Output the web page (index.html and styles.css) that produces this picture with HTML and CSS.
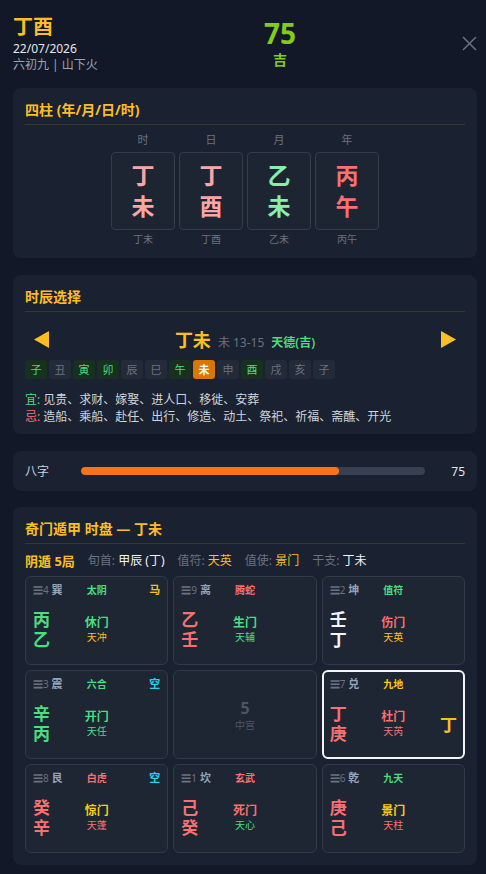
FILE: index.html
```html
<!doctype html>
<html lang="zh">
  <head>
    <meta charset="UTF-8" />
    <meta name="viewport" content="width=device-width, initial-scale=1.0" />
    <title>丁酉 - 22/07/2026</title>
    <link rel="stylesheet" href="styles.css">
  </head>

  <body>
    <div class="page">
      <div class="top">
        <div class="day">
          <div class="day-name">丁酉</div>
          <div class="day-date">22/07/2026</div>
          <div class="day-sub">六初九 | 山下火</div>
        </div>
        <div class="score">
          <div class="score-num">75</div>
          <div class="score-tag">吉</div>
        </div>
        <button class="close" aria-label="关闭">
          <svg width="15" height="15" viewBox="0 0 15 15">
            <path d="M1 1 L14 14 M14 1 L1 14" stroke="#6b7280" stroke-width="1.5" fill="none" />
          </svg>
        </button>
      </div>

      <!-- 四柱 -->
      <div class="card">
        <h2 class="card-title">四柱 (年/月/日/时)</h2>
        <div class="pillars">
          <div class="pillar">
            <div class="pillar-label">时</div>
            <div class="pillar-box pink"><span>丁</span><span>未</span></div>
            <div class="pillar-name">丁未</div>
          </div>
          <div class="pillar">
            <div class="pillar-label">日</div>
            <div class="pillar-box pink"><span>丁</span><span>酉</span></div>
            <div class="pillar-name">丁酉</div>
          </div>
          <div class="pillar">
            <div class="pillar-label">月</div>
            <div class="pillar-box mint"><span>乙</span><span>未</span></div>
            <div class="pillar-name">乙未</div>
          </div>
          <div class="pillar">
            <div class="pillar-label">年</div>
            <div class="pillar-box red"><span>丙</span><span>午</span></div>
            <div class="pillar-name">丙午</div>
          </div>
        </div>
      </div>

      <!-- 时辰选择 -->
      <div class="card card-hours">
        <h2 class="card-title">时辰选择</h2>
        <div class="hour-nav">
          <button class="arrow" aria-label="上一个">
            <svg width="15" height="17" viewBox="0 0 15 17"><polygon points="15,0 15,17 0,8.5" fill="#fbbf24" /></svg>
          </button>
          <div class="hour-current">
            <span class="hour-name">丁未</span>
            <span class="hour-time">未 13-15</span>
            <span class="hour-god">天德(吉)</span>
          </div>
          <button class="arrow" aria-label="下一个">
            <svg width="15" height="17" viewBox="0 0 15 17"><polygon points="0,0 0,17 15,8.5" fill="#fbbf24" /></svg>
          </button>
        </div>
        <div class="chips">
          <span class="chip good">子</span>
          <span class="chip">丑</span>
          <span class="chip good">寅</span>
          <span class="chip good">卯</span>
          <span class="chip">辰</span>
          <span class="chip">巳</span>
          <span class="chip good">午</span>
          <span class="chip active">未</span>
          <span class="chip">申</span>
          <span class="chip good">酉</span>
          <span class="chip">戌</span>
          <span class="chip">亥</span>
          <span class="chip">子</span>
        </div>
        <div class="rules">
          <div><span class="yi">宜:</span> 见贵、求财、嫁娶、进人口、移徙、安葬</div>
          <div><span class="ji">忌:</span> 造船、乘船、赴任、出行、修造、动土、祭祀、祈福、斋醮、开光</div>
        </div>
      </div>

      <!-- 八字分数 -->
      <div class="card card-bar">
        <div class="bar-row">
          <span class="bar-label">八字</span>
          <div class="bar-track"><div class="bar-fill" style="width: 75%"></div></div>
          <span class="bar-value">75</span>
        </div>
      </div>

      <!-- 奇门遁甲 -->
      <div class="card">
        <h2 class="card-title">奇门遁甲 时盘 — 丁未</h2>
        <div class="qm-info">
          <span class="qm-ju">阴遁 5局</span>
          <span><span class="muted">旬首:</span> <span class="white">甲辰 (丁)</span></span>
          <span><span class="muted">值符:</span> <span class="gold">天英</span></span>
          <span><span class="muted">值使:</span> <span class="gold">景门</span></span>
          <span><span class="muted">干支:</span> <span class="white">丁未</span></span>
        </div>

        <div class="qm-grid">
          <div class="cell">
            <div class="cell-top">
              <span class="palace"><span class="gua">☰4</span> 巽</span>
              <span class="deity green">太阴</span>
              <span class="mark gold">马</span>
            </div>
            <div class="cell-body">
              <div class="stems green"><span>丙</span><span>乙</span></div>
              <div class="door"><span class="door-name green">休门</span><span class="star gold">天冲</span></div>
            </div>
          </div>

          <div class="cell">
            <div class="cell-top">
              <span class="palace"><span class="gua">☰9</span> 离</span>
              <span class="deity red">腾蛇</span>
            </div>
            <div class="cell-body">
              <div class="stems red"><span>乙</span><span>壬</span></div>
              <div class="door"><span class="door-name green">生门</span><span class="star green">天辅</span></div>
            </div>
          </div>

          <div class="cell">
            <div class="cell-top">
              <span class="palace"><span class="gua">☰2</span> 坤</span>
              <span class="deity green">值符</span>
            </div>
            <div class="cell-body">
              <div class="stems white"><span>壬</span><span>丁</span></div>
              <div class="door"><span class="door-name red">伤门</span><span class="star gold">天英</span></div>
            </div>
          </div>

          <div class="cell">
            <div class="cell-top">
              <span class="palace"><span class="gua">☰3</span> 震</span>
              <span class="deity green">六合</span>
              <span class="mark cyan">空</span>
            </div>
            <div class="cell-body">
              <div class="stems green"><span>辛</span><span>丙</span></div>
              <div class="door"><span class="door-name green">开门</span><span class="star green">天任</span></div>
            </div>
          </div>

          <div class="cell cell-center">
            <span class="center-num">5</span>
            <span class="center-name">中宫</span>
          </div>

          <div class="cell selected">
            <div class="cell-top">
              <span class="palace"><span class="gua">☰7</span> 兑</span>
              <span class="deity yellow">九地</span>
            </div>
            <div class="cell-body">
              <div class="stems red"><span>丁</span><span>庚</span></div>
              <div class="door"><span class="door-name red">杜门</span><span class="star red">天芮</span></div>
              <div class="extra gold">丁</div>
            </div>
          </div>

          <div class="cell">
            <div class="cell-top">
              <span class="palace"><span class="gua">☰8</span> 艮</span>
              <span class="deity red">白虎</span>
              <span class="mark cyan">空</span>
            </div>
            <div class="cell-body">
              <div class="stems red"><span>癸</span><span>辛</span></div>
              <div class="door"><span class="door-name yellow">惊门</span><span class="star red">天蓬</span></div>
            </div>
          </div>

          <div class="cell">
            <div class="cell-top">
              <span class="palace"><span class="gua">☰1</span> 坎</span>
              <span class="deity red">玄武</span>
            </div>
            <div class="cell-body">
              <div class="stems red"><span>己</span><span>癸</span></div>
              <div class="door"><span class="door-name red">死门</span><span class="star green">天心</span></div>
            </div>
          </div>

          <div class="cell">
            <div class="cell-top">
              <span class="palace"><span class="gua">☰6</span> 乾</span>
              <span class="deity green">九天</span>
            </div>
            <div class="cell-body">
              <div class="stems red"><span>庚</span><span>己</span></div>
              <div class="door"><span class="door-name yellow">景门</span><span class="star red">天柱</span></div>
            </div>
          </div>
        </div>
      </div>
    </div>
  </body>
</html>
```

FILE: styles.css
```css
body {
  margin: 0;
  background: #121827;
  color: #e5e7eb;
  font-family: 'Noto Sans', 'Noto Sans CJK SC', sans-serif;
}

.page {
  padding: 13px 9px 0 13px;
}

button {
  background: none;
  border: none;
  padding: 0;
  cursor: pointer;
  display: flex;
}

/* header */

.top {
  display: flex;
  justify-content: space-between;
  align-items: center;
  margin-bottom: 15px;
}

.day-name {
  font-size: 20px;
  font-weight: 700;
  line-height: 28px;
  color: #fbbf24;
}

.day-date {
  font-size: 12px;
  line-height: 16px;
  color: #e5e7eb;
}

.day-sub {
  font-size: 12px;
  line-height: 16px;
  color: #9ca3af;
}

.score {
  text-align: center;
}

.score-num {
  font-size: 28px;
  font-weight: 700;
  line-height: 32px;
  color: #84cc16;
}

.score-tag {
  font-size: 14px;
  font-weight: 700;
  line-height: 18px;
  margin-top: 2px;
  color: #84cc16;
}

/* cards */

.card {
  background: #1a2130;
  border-radius: 8px;
  padding: 12px;
  margin-bottom: 17px;
}

.card-title {
  margin: 0;
  font-size: 14px;
  font-weight: 700;
  line-height: 20px;
  color: #fbbf24;
  padding-bottom: 4px;
  border-bottom: 1px solid rgba(251, 191, 36, 0.13);
}

/* four pillars */

.pillars {
  display: flex;
  justify-content: center;
  gap: 4px;
  margin-top: 8px;
}

.pillar {
  width: 64px;
  text-align: center;
}

.pillar-label {
  font-size: 11px;
  line-height: 14px;
  color: #6b7280;
  margin-bottom: 5px;
}

.pillar-box {
  height: 76px;
  border: 1px solid #343c4b;
  border-radius: 4px;
  background: #1e2532;
  display: flex;
  flex-direction: column;
  justify-content: center;
  font-size: 23px;
  font-weight: 700;
  line-height: 31px;
}

.pillar-box.pink { color: #fca5a5; }
.pillar-box.mint { color: #86efac; }
.pillar-box.red { color: #f87171; }

.pillar-name {
  font-size: 10px;
  line-height: 14px;
  margin-top: 2px;
  color: #6b7280;
}

/* hour picker */

.card-hours {
  padding-bottom: 9px;
}

.hour-nav {
  display: flex;
  justify-content: space-between;
  align-items: center;
  height: 26px;
  margin-top: 14px;
  padding: 0 9px;
}

.hour-current {
  display: flex;
  align-items: baseline;
  gap: 7px;
}

.hour-name {
  font-size: 18px;
  font-weight: 700;
  color: #fbbf24;
}

.hour-time {
  font-size: 12px;
  color: #6b7280;
}

.hour-god {
  font-size: 12px;
  font-weight: 600;
  color: #4ade80;
}

.chips {
  display: flex;
  gap: 2px;
  margin-top: 8px;
}

.chip {
  width: 22px;
  height: 19px;
  line-height: 19px;
  text-align: center;
  font-size: 11px;
  border-radius: 3px;
  background: #232a38;
  color: #6b7280;
}

.chip.good {
  background: #17301f;
  color: #4ade80;
}

.chip.active {
  background: #d97706;
  color: #fff;
  font-weight: 700;
}

.rules {
  margin-top: 12px;
  font-size: 12px;
  line-height: 17px;
  color: #d1d5db;
}

.yi { color: #4ade80; }
.ji { color: #f87171; }

/* score bar */

.card-bar {
  margin-bottom: 16px;
}

.bar-row {
  display: flex;
  align-items: center;
  height: 16px;
}

.bar-label {
  width: 56px;
  font-size: 12px;
  color: #cbd5e1;
}

.bar-track {
  flex: 1;
  height: 8px;
  border-radius: 4px;
  background: #374151;
  overflow: hidden;
}

.bar-fill {
  height: 100%;
  border-radius: 4px;
  background: #f97316;
}

.bar-value {
  width: 40px;
  text-align: right;
  font-size: 12px;
  color: #e5e7eb;
}

/* qimen board */

.qm-info {
  display: flex;
  gap: 13px;
  margin-top: 8px;
  line-height: 18px;
  font-size: 12px;
}

.qm-ju {
  font-size: 13px;
  font-weight: 700;
  color: #fbbf24;
}

.muted { color: #6b7280; }
.white { color: #f3f4f6; }
.gold { color: #fbbf24; }
.green { color: #4ade80; }
.red { color: #f87171; }
.yellow { color: #facc15; }
.cyan { color: #22d3ee; }

.qm-grid {
  display: grid;
  grid-template-columns: repeat(3, 1fr);
  grid-auto-rows: 89px;
  gap: 5px;
  margin-top: 6px;
}

.cell {
  background: #1e2533;
  border: 1px solid #323a4a;
  border-radius: 6px;
  padding: 6px 7px;
  display: flex;
  flex-direction: column;
}

.cell.selected {
  border: 2px solid #f3f4f6;
  padding: 5px 6px;
}

.cell-top {
  display: grid;
  grid-template-columns: 1fr auto 1fr;
  align-items: center;
  line-height: 14px;
  font-size: 10px;
}

.palace {
  font-size: 11px;
  font-weight: 700;
  color: #94a3b8;
}

.gua {
  font-size: 10px;
  font-weight: 400;
  color: #6b7280;
}

.deity {
  font-weight: 700;
}

.mark {
  justify-self: end;
  font-weight: 700;
  font-size: 11px;
}

.cell-body {
  flex: 1;
  display: grid;
  grid-template-columns: 1fr auto 1fr;
  align-items: center;
  padding-top: 4px;
}

.stems {
  display: flex;
  flex-direction: column;
  font-size: 17px;
  font-weight: 700;
  line-height: 20px;
}

.door {
  display: flex;
  flex-direction: column;
  align-items: center;
}

.door-name {
  font-size: 12px;
  font-weight: 700;
  line-height: 16px;
}

.star {
  font-size: 10px;
  line-height: 13px;
}

.extra {
  justify-self: end;
  font-size: 17px;
  font-weight: 700;
}

.cell-center {
  justify-content: center;
  align-items: center;
}

.center-num {
  font-size: 16px;
  font-weight: 700;
  line-height: 20px;
  color: #4b5563;
}

.center-name {
  font-size: 10px;
  line-height: 14px;
  color: #4b5563;
}
```
